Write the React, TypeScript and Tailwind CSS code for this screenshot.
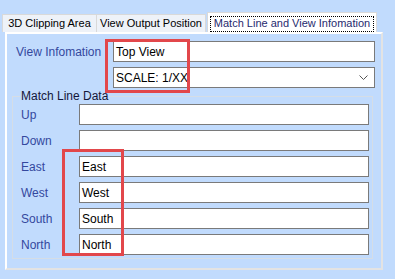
import React from "react";

const rows = [
  { label: "Up", value: "" },
  { label: "Down", value: "" },
  { label: "East", value: "East" },
  { label: "West", value: "West" },
  { label: "South", value: "South" },
  { label: "North", value: "North" },
];

function TextBox({ value, className = "" }: { value: string; className?: string }) {
  return (
    <div
      className={`flex h-[21px] items-center whitespace-nowrap border border-[#7a7a7a] bg-white pl-[2px] text-[12px] text-black ${className}`}
    >
      {value}
    </div>
  );
}

export default function App() {
  return (
    <div
      className="relative h-[279px] w-[395px] overflow-hidden whitespace-nowrap bg-[#c1dbfd] text-[12px] leading-none"
      style={{ fontFamily: '"Liberation Sans", Arial, sans-serif' }}
    >
      {/* tab strip */}
      <div className="flex h-[32px] items-end pl-[2px] text-[11px]">
        <div className="flex h-[18px] w-[95px] items-center justify-center border border-b-0 border-[#d9d9d9] bg-[#eef2f8] text-black">
          3D Clipping Area
        </div>
        <div className="flex h-[18px] w-[109px] items-center justify-center border border-b-0 border-l-0 border-[#d9d9d9] bg-[#eef2f8] text-black">
          View Output Position
        </div>
        <div className="ml-[1px] flex h-[20px] w-[170px] items-center justify-center border border-b-0 border-[#d9d9d9] bg-white px-[2px] pt-[2px]">
          <div className="flex h-[16px] w-full items-center justify-center border border-dotted border-black text-[#1f2a6e]">
            Match Line and View Infomation
          </div>
        </div>
      </div>

      {/* tab page */}
      <div className="ml-[5px] h-[238px] w-[378px] border-2 border-white border-r-[#e3e3e3] border-b-[#e3e3e3]">
        <div className="pl-[9px] pt-[7px]">
          <div className="flex items-center">
            <span className="w-[97px] text-[#34489e]">View Infomation</span>
            <TextBox value="Top View" className="w-[262px]" />
          </div>
          <div className="mt-[5px] flex items-center">
            <span className="w-[97px]" />
            <div className="flex h-[21px] w-[262px] items-center justify-between border border-[#7a7a7a] bg-white pl-[2px] pr-[6px] text-black">
              SCALE: 1/XX
              <svg width="9" height="6" viewBox="0 0 9 6" fill="none">
                <polyline points="0.5,0.5 4.5,4.5 8.5,0.5" stroke="#555" strokeWidth="1" />
              </svg>
            </div>
          </div>
        </div>

        <fieldset className="ml-[5px] mt-[1px] w-[361px] border border-[#d5dde6] px-0 pb-[3px]">
          <legend className="ml-[7px] px-[1px] text-[12px] font-medium leading-[14px] text-[#14173a]">
            Match Line Data
          </legend>
          <div className="mt-[1px] flex flex-col gap-[5px]">
            {rows.map((r) => (
              <div key={r.label} className="flex items-center pl-[8px]">
                <span className="w-[58px] text-[#34489e]">{r.label}</span>
                <TextBox value={r.value} className="w-[290px]" />
              </div>
            ))}
          </div>
        </fieldset>
      </div>

      {/* annotation boxes */}
      <div className="absolute left-[105px] top-[39px] h-[54px] w-[85px] border-[3px] border-[#e2474b]" />
      <div className="absolute left-[62px] top-[149px] h-[107px] w-[62px] border-[3px] border-[#e2474b]" />
    </div>
  );
}
